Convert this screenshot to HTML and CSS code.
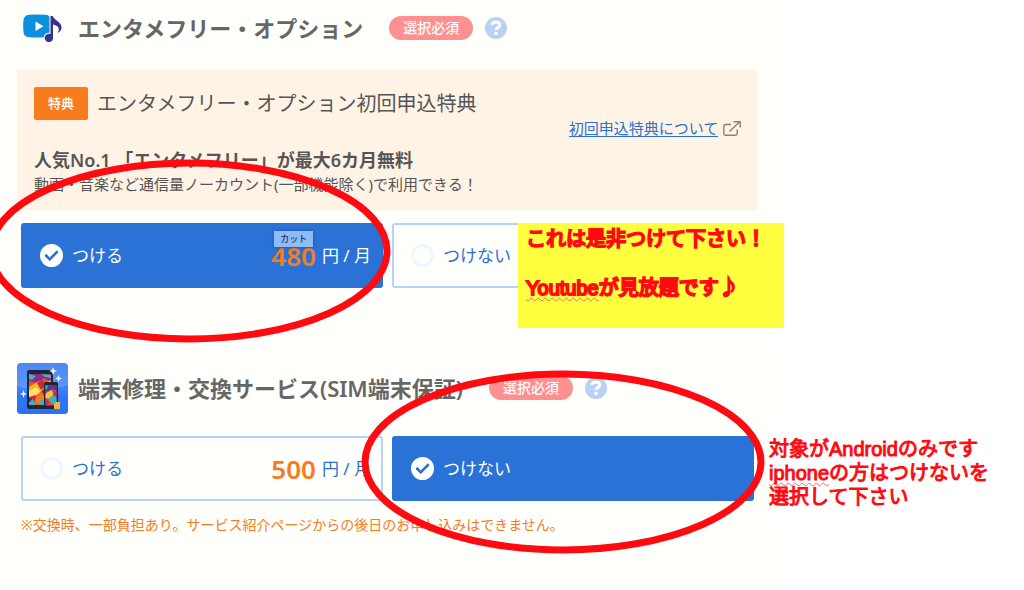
FILE: index.html
```html
<!DOCTYPE html>
<html lang="ja">
<head>
<meta charset="utf-8">
<title>オプション選択</title>
<link rel="stylesheet" href="styles.css">
</head>
<body>
<main class="panel">
  <section class="service">
    <header class="service-head">
      <span class="service-icon">
        <svg width="39" height="28" viewBox="0 0 39 28" aria-hidden="true">
          <path d="M6 .8Q14 0 23 .8Q27.500 1.500 27.500 6V18Q27 22.500 22 23Q13 24.200 5 23Q.8 22.500.5 18Q-.2 12 .5 6Q1 1.500 6 .8Z" fill="#0a90dc"/>
          <path d="M12.500 7.500V17L20.500 12.300Z" fill="#fff"/>
          <path d="M27.500 2H29.800C31 6.500 38.500 7.500 38.500 13.500Q38.500 17 34.500 19C37.500 14 35 11.500 30 10.500V23A4.200 4.200 0 1 1 27.500 20Z" fill="#3a3091" stroke="#fffffb" stroke-width="2" paint-order="stroke" stroke-linejoin="round"/>
        </svg>
      </span>
      <h2 class="service-title">エンタメフリー・オプション</h2>
      <span class="required">選択必須</span>
      <button class="help" type="button" aria-label="ヘルプ"><svg width="12" height="16" viewBox="0 0 12 16" aria-hidden="true"><path d="M2 5C2 2.600 3.700 2 6 2C8.300 2 9.800 3 9.800 5C9.800 7.500 6 7.300 6 10" fill="none" stroke="#fff" stroke-width="3"/><rect x="4.300" y="11.700" width="3.400" height="3.200" rx="1" fill="#fff"/></svg></button>
    </header>

    <div class="promo">
      <div class="promo-head">
        <span class="promo-tag">特典</span>
        <h3 class="promo-title">エンタメフリー・オプション初回申込特典</h3>
      </div>
      <div class="promo-more">
        <a class="promo-link" href="#">初回申込特典について</a>
        <svg width="18" height="15" viewBox="0 0 18 15" fill="none" stroke="#8b8177" stroke-width="1.400" aria-hidden="true"><path d="M8 3.500H2.500Q.8 3.500.8 5.200V12.500Q.8 14.200 2.500 14.200H12.500Q14.200 14.200 14.200 12.500V8.500M6.500 10.500L16.500 1M10.500.8H17.200V6.500"/></svg>
      </div>
      <p class="promo-lead">人気No.1 「エンタメフリー」が最大6カ月無料</p>
      <p class="promo-text">動画・音楽など通信量ノーカウント(一部機能除く)で利用できる！</p>
    </div>

    <div class="options">
      <label class="option">
        <input class="radio" type="radio" name="entertainment" checked>
        <span>つける</span>
        <span class="price"><strong class="amount">480</strong><span>円 / 月</span><span class="cut">カット</span></span>
      </label>
      <label class="option">
        <input class="radio" type="radio" name="entertainment">
        <span>つけない</span>
      </label>
      <svg class="ring ring-first" viewBox="0 0 404 184" aria-hidden="true"><ellipse cx="202" cy="92" rx="198" ry="88"/></svg>
      <aside class="memo memo-boxed">
        <p>これは是非つけて下さい！</p>
        <p><span class="typo">Youtube</span>が見放題です<span class="note">♪</span></p>
      </aside>
    </div>
  </section>

  <section class="service">
    <header class="service-head">
      <span class="service-icon">
        <svg width="51" height="51" viewBox="0 0 51 51" aria-hidden="true">
          <defs>
            <linearGradient id="sky" x2="0" y2="1"><stop offset="0" stop-color="#4d88f3"/><stop offset=".5" stop-color="#5b98f8"/><stop offset=".65" stop-color="#2f78f5"/><stop offset="1" stop-color="#2b70ef"/></linearGradient>
            <clipPath id="screen"><rect x="12" y="11" width="22" height="31"/></clipPath>
            <clipPath id="phone"><rect x="28.500" y="22.500" width="11" height="20"/></clipPath>
          </defs>
          <rect width="51" height="51" rx="4" fill="url(#sky)"/>
          <path d="M0 23Q25 31 51 22V47Q51 51 47 51H4Q0 51 0 47Z" fill="#2f75f2" opacity=".6"/>
          <rect x="10" y="7" width="26" height="39" rx="2" fill="#202633"/>
          <g clip-path="url(#screen)">
            <path fill="#e85125" d="M12 11H34V42H12Z"/>
            <path fill="#8b2b8d" d="M12 11H34V19L27 15L20 20L12 18Z"/>
            <path fill="#34b9c3" d="M12 11L19 13L15 17L12 16ZM24 11L34 12V15L28 14Z"/>
            <path fill="#f4b32b" d="M12 24L22 18L27 25L22 31L12 32ZM28 20L34 17V25L29 28Z"/>
            <path fill="#ffe06a" d="M12 28L19 24L23 28L18 34L12 34Z"/>
            <path fill="#c72740" d="M20 20L25 17L29 23L24 27ZM12 34L19 32L17 42H12Z"/>
            <path fill="#f07a28" d="M19 34L24 30L29 36L25 42L18 40Z"/>
            <path fill="#38b6b2" d="M12 38L16 36L19 42H12ZM23 38L27 36V42H22Z"/>
            <path fill="#393288" d="M12 35L15 36L13 39H12ZM25 28L30 25L34 31L29 35Z"/>
          </g>
          <rect x="27" y="19" width="14" height="27" rx="2" fill="#202633"/>
          <g clip-path="url(#phone)">
            <path fill="#e34833" d="M28 22H40V43H28Z"/>
            <path fill="#4d3aa0" d="M28 22H40V28L35 26L31 29L28 27Z"/>
            <path fill="#f7c33d" d="M28 31L34 27L37 31L33 36L28 35Z"/>
            <path fill="#35b5c2" d="M31 36L36 32L40 35V40L35 41ZM28 22H31L30 26H28Z"/>
            <path fill="#b12d91" d="M36 28L40 29V34L36 32ZM28 37L32 38L30 43H28Z"/>
          </g>
          <path d="M39 39H43V46H37V41Z" fill="#f0b540"/>
          <g fill="#e9f3ff"><path d="M36 4L37.300 7L40 8L37.300 9L36 12L34.800 9L32 8L34.800 7Z"/><path d="M41.500 12L42.500 14.500L45 15.500L42.500 16.500L41.500 19L40.500 16.500L38 15.500L40.500 14.500Z"/><path d="M6.500 27L7.500 30L10 31L7.500 32L6.500 35L5.500 32L3 31L5.500 30Z"/></g>
        </svg>
      </span>
      <h2 class="service-title">端末修理・交換サービス(SIM端末保証)</h2>
      <span class="required">選択必須</span>
      <button class="help" type="button" aria-label="ヘルプ"><svg width="12" height="16" viewBox="0 0 12 16" aria-hidden="true"><path d="M2 5C2 2.600 3.700 2 6 2C8.300 2 9.800 3 9.800 5C9.800 7.500 6 7.300 6 10" fill="none" stroke="#fff" stroke-width="3"/><rect x="4.300" y="11.700" width="3.400" height="3.200" rx="1" fill="#fff"/></svg></button>
    </header>

    <div class="options options-repair">
      <label class="option">
        <input class="radio" type="radio" name="repair">
        <span>つける</span>
        <span class="price"><strong class="amount">500</strong><span>円 / 月</span></span>
      </label>
      <label class="option">
        <input class="radio" type="radio" name="repair" checked>
        <span>つけない</span>
      </label>
      <svg class="ring ring-second" viewBox="0 0 404 184" aria-hidden="true"><ellipse cx="202" cy="92" rx="198" ry="88"/></svg>
      <aside class="memo memo-side">
        <p>対象がAndroidのみです<br><span class="typo">iphone</span>の方はつけないを<br>選択して下さい</p>
      </aside>
    </div>
    <p class="footnote">※交換時、一部負担あり。サービス紹介ページからの後日のお申し込みはできません。</p>
  </section>
</main>
</body>
</html>
```
FILE: styles.css
```css
* {
  box-sizing: border-box;
}

body {
  margin: 0;
  background: #fff;
  color: #555;
  font-family: "Noto Sans", "Noto Sans CJK JP", sans-serif;
  overflow-x: hidden;
}

h2, h3, p {
  margin: 0;
}

.panel {
  width: 76%;
  min-height: 100vh;
  padding: 2px 20px 48px 17px;
  background: #fffffb;
}

.service + .service {
  margin-top: 74px;
}

.service-head {
  display: flex;
  align-items: center;
  height: 52px;
}

.service-icon {
  display: flex;
  justify-content: center;
  flex: none;
  width: 51px;
  margin-right: 10px;
}

.service-title {
  color: #666;
  font-size: 22px;
  font-weight: 600;
  line-height: 32px;
  white-space: nowrap;
}

.required {
  margin-left: 26px;
  padding: 0 14px;
  border-radius: 12px;
  background: #ff9092;
  color: #fff;
  font-size: 14px;
  font-weight: 500;
  line-height: 24px;
  white-space: nowrap;
}

.help {
  display: flex;
  align-items: center;
  justify-content: center;
  width: 22px;
  height: 22px;
  margin-left: 12px;
  padding: 0;
  border: 0;
  border-radius: 50%;
  background: #b8d1f4;
}

.promo {
  margin-top: 16px;
  padding: 17px 17px 14px;
  background: #fff3e6;
}

.promo-head {
  display: flex;
  align-items: center;
  gap: 9px;
}

.promo-tag {
  padding: 0 14px;
  border-radius: 2px;
  background: #f77c1e;
  color: #fff;
  font-size: 13px;
  font-weight: 500;
  line-height: 33px;
}

.promo-title {
  font-size: 20px;
  font-weight: 400;
  line-height: 30px;
}

.promo-more {
  display: flex;
  align-items: center;
  justify-content: flex-end;
  gap: 5px;
  height: 16px;
}

.promo-link {
  border-bottom: 1px solid #2a72d5;
  color: #2a72d5;
  font-size: 15px;
  line-height: 16px;
  text-decoration: none;
}

.promo-lead {
  margin-top: 12px;
  font-size: 18px;
  font-weight: 600;
  line-height: 24px;
}

.promo-text {
  font-size: 15px;
  line-height: 24px;
}

.options {
  position: relative;
  display: grid;
  grid-template-columns: 1fr 1fr;
  gap: 9px;
  margin: 13px 4px 0;
}

.options-repair {
  margin-top: 22px;
}

.option {
  display: flex;
  align-items: center;
  gap: 9px;
  height: 65px;
  padding: 0 10px 0 17px;
  border: 2px solid #b8d1f4;
  border-radius: 3px;
  color: #2a72d5;
  font-size: 17px;
  line-height: 24px;
}

.option:has(.radio:checked) {
  border-color: #2a72d5;
  background: #2a72d5;
  color: #fff;
}

.radio {
  display: flex;
  justify-content: center;
  appearance: none;
  flex: none;
  width: 23px;
  height: 23px;
  margin: 0;
  border: 3px solid #eef6ff;
  border-radius: 50%;
}

.radio:checked {
  border-color: #fff;
  background: #fff;
}

.radio:checked::before {
  content: "";
  flex: none;
  box-sizing: border-box;
  width: 13px;
  height: 8px;
  margin-top: 3px;
  border: solid #2a72d5;
  border-width: 0 0 3px 3px;
  border-radius: 1px;
  transform: rotate(-45deg);
}

.price {
  position: relative;
  display: flex;
  align-items: center;
  gap: 6px;
  margin-left: auto;
}

.amount {
  color: #f77c1e;
  font-size: 26px;
  font-weight: 600;
}

.cut {
  position: absolute;
  top: -13px;
  left: 3px;
  padding: 0 6px;
  background: #8fbcf6;
  box-shadow: 0 0 3px #1c55a8;
  color: #17366e;
  font-size: 9px;
  font-weight: 500;
  line-height: 16px;
}

.footnote {
  margin: 12px 4px 0;
  color: #f77c1e;
  font-size: 14px;
  line-height: 24px;
}

/* Hand-added marks over the form */
.ring {
  position: absolute;
  width: 404px;
  height: 184px;
  pointer-events: none;
}

.ring ellipse {
  fill: none;
  stroke: #ff0a10;
  stroke-width: 7;
}

.ring-first {
  top: -64px;
  left: -34px;
}

.ring-second {
  top: -66px;
  left: 340px;
}

.memo {
  position: absolute;
  color: #ff0a10;
  font-family: "Liberation Sans", "Noto Sans CJK JP", sans-serif;
  font-size: 20px;
  line-height: 24px;
  white-space: nowrap;
  -webkit-text-stroke: 1px #ff0a10;
}

.memo-boxed {
  top: 0;
  left: 497px;
  display: grid;
  align-content: start;
  gap: 24px;
  width: 266px;
  height: 105px;
  padding: 4px 8px;
  background: #ffff40;
  -webkit-text-stroke-width: 2px;
}

.memo-side {
  top: 1px;
  left: 748px;
}

.note {
  font-family: "Noto Sans CJK JP", sans-serif;
}

.typo {
  text-decoration: underline wavy #f66 1px;
  text-underline-offset: 2px;
  text-decoration-skip-ink: none;
}
```
